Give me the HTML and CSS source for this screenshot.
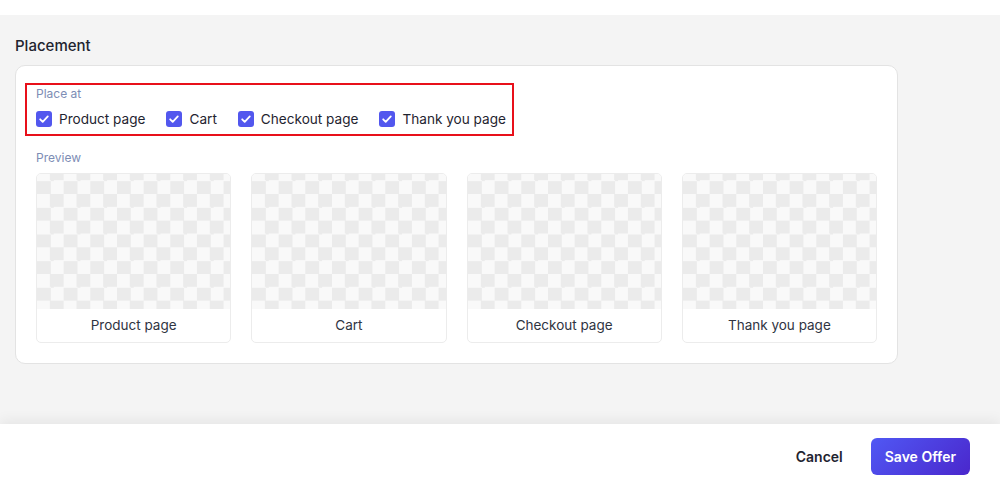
FILE: index.html
```html
<!DOCTYPE html>
<html lang="en">
<head>
<meta charset="utf-8">
<title>Placement</title>
<link rel="stylesheet" href="styles.css">
</head>
<body>
<div class="topbar"></div>
<main class="main">
  <h2 class="section-title">Placement</h2>
  <section class="panel">
    <div class="place-at">
      <div class="field-label">Place at</div>
      <div class="checks">
        <label class="check"><span class="box"><svg viewBox="0 0 16 16"><path d="M4.2 8.3l2.5 2.5 5.1-5.4" fill="none" stroke="#fff" stroke-width="1.8" stroke-linecap="round" stroke-linejoin="round"/></svg></span>Product page</label>
        <label class="check"><span class="box"><svg viewBox="0 0 16 16"><path d="M4.2 8.3l2.5 2.5 5.1-5.4" fill="none" stroke="#fff" stroke-width="1.8" stroke-linecap="round" stroke-linejoin="round"/></svg></span>Cart</label>
        <label class="check"><span class="box"><svg viewBox="0 0 16 16"><path d="M4.2 8.3l2.5 2.5 5.1-5.4" fill="none" stroke="#fff" stroke-width="1.8" stroke-linecap="round" stroke-linejoin="round"/></svg></span>Checkout page</label>
        <label class="check"><span class="box"><svg viewBox="0 0 16 16"><path d="M4.2 8.3l2.5 2.5 5.1-5.4" fill="none" stroke="#fff" stroke-width="1.8" stroke-linecap="round" stroke-linejoin="round"/></svg></span>Thank you page</label>
      </div>
    </div>
    <div class="field-label preview-label">Preview</div>
    <div class="cards">
      <div class="card"><div class="thumb"></div><div class="card-label">Product page</div></div>
      <div class="card"><div class="thumb"></div><div class="card-label">Cart</div></div>
      <div class="card"><div class="thumb"></div><div class="card-label">Checkout page</div></div>
      <div class="card"><div class="thumb"></div><div class="card-label">Thank you page</div></div>
    </div>
  </section>
</main>
<footer class="footer">
  <button class="btn-cancel" type="button">Cancel</button>
  <button class="btn-save" type="button">Save Offer</button>
</footer>
</body>
</html>
```

FILE: styles.css
```css
* { box-sizing: border-box; }

html, body {
  margin: 0;
  height: 100%;
}

body {
  font-family: Inter, "Liberation Sans", Arial, sans-serif;
  background: #ffffff;
  color: #1f2430;
  display: flex;
  flex-direction: column;
  overflow: hidden;
}

.topbar {
  height: 15px;
  background: #ffffff;
  flex: none;
}

.main {
  flex: 1;
  background: #f4f4f4;
  padding: 21px 15px 0;
}

.section-title {
  margin: 0 0 9px;
  font-size: 15px;
  line-height: 20px;
  font-weight: 500;
  color: #1f2430;
}

.panel {
  width: 883px;
  background: #ffffff;
  border: 1px solid #e3e3e3;
  border-radius: 10px;
  padding: 17px 20px 20px;
}

.place-at {
  width: fit-content;
  margin-left: -11px;
  border: 2px solid #e8101a;
  padding: 1px 6px 5px 9px;
}

.field-label {
  font-size: 12px;
  line-height: 16px;
  color: #7d8db5;
}

.checks {
  display: flex;
  gap: 21px;
  margin-top: 7px;
}

.check {
  display: flex;
  align-items: center;
  gap: 7px;
  font-size: 13.6px;
  line-height: 20px;
  color: #1f2430;
}

.box {
  width: 16px;
  height: 16px;
  border-radius: 3px;
  background: #5257ee;
  display: flex;
}

.box svg {
  width: 16px;
  height: 16px;
}

.preview-label {
  margin-top: 14px;
}

.cards {
  display: grid;
  grid-template-columns: repeat(4, 1fr);
  gap: 20px;
  margin-top: 7px;
}

.card {
  border: 1px solid #ececec;
  border-radius: 5px;
  overflow: hidden;
  background: #ffffff;
}

.thumb {
  height: 135px;
  background: repeating-conic-gradient(#ebebeb 0 25%, #f9f9f9 0 50%) 0 -6.67px / 26.67px 26.67px;
}

.card-label {
  height: 33px;
  padding-bottom: 1px;
  display: flex;
  align-items: center;
  justify-content: center;
  font-size: 13.5px;
  color: #2f3442;
}

.footer {
  height: 76px;
  flex: none;
  background: #ffffff;
  display: flex;
  justify-content: flex-end;
  align-items: flex-start;
  gap: 12px;
  padding: 14px 30px 0 0;
  box-shadow: 0 -4px 12px rgba(0, 0, 0, 0.06);
  position: relative;
}

.btn-cancel,
.btn-save {
  font-family: Inter, "Liberation Sans", Arial, sans-serif;
  font-size: 14px;
  font-weight: 600;
  height: 37px;
  border-radius: 6px;
  border: none;
  white-space: nowrap;
  cursor: pointer;
}

.btn-cancel {
  padding: 0 16px;
  background: transparent;
  color: #1f2430;
}

.btn-save {
  padding: 0 14px;
  color: #ffffff;
  background: linear-gradient(135deg, #5058f4, #4a27cc);
}
```
